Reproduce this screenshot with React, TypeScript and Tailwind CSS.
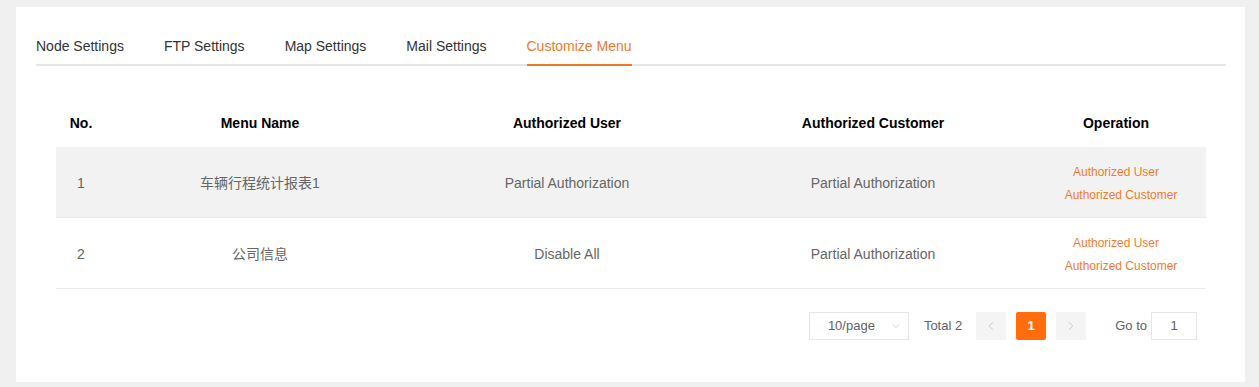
import { ChevronDown, ChevronLeft, ChevronRight } from "lucide-react";

const tabs = ["Node Settings", "FTP Settings", "Map Settings", "Mail Settings", "Customize Menu"];

const rows = [
  { no: 1, name: "车辆行程统计报表1", user: "Partial Authorization", customer: "Partial Authorization" },
  { no: 2, name: "公司信息", user: "Disable All", customer: "Partial Authorization" },
];

export default function App() {
  return (
    <div
      className="min-h-[387px] bg-[#f0f0f0] pt-[7px] pb-[5px] pl-4 pr-[14px]"
      style={{ fontFamily: '"Liberation Sans", Arial, "Noto Sans CJK SC", sans-serif' }}
    >
      <div className="bg-white h-[375px] pl-5 pr-[19px] pt-[29px]">
        {/* Tabs */}
        <div className="flex border-b-2 border-[#e6e6e6] h-[30px]">
          {tabs.map((t, i) => {
            const active = i === tabs.length - 1;
            return (
              <div
                key={t}
                className={
                  active
                    ? "text-sm text-[#f07a2c] border-b-2 border-[#f07a22] -mb-[2px] leading-[20px]"
                    : "text-sm text-[#333] mr-10 leading-[20px]"
                }
              >
                {t}
              </div>
            );
          })}
        </div>

        {/* Table */}
        <div className="mx-5 mt-[34px]">
          <div className="grid grid-cols-[50px_308px_306px_306px_180px] h-[47px] items-center text-sm font-bold text-black pb-[2px]">
            <div className="text-center">No.</div>
            <div className="text-center">Menu Name</div>
            <div className="text-center">Authorized User</div>
            <div className="text-center">Authorized Customer</div>
            <div className="text-center">Operation</div>
          </div>
          {rows.map((r) => (
            <div
              key={r.no}
              className={
                "grid grid-cols-[50px_308px_306px_306px_180px] h-[71px] items-center text-sm text-[#666] border-b border-[#ebebeb] pt-[2px] " +
                (r.no === 1 ? "bg-[#f2f2f2]" : "bg-white")
              }
            >
              <div className="text-center">{r.no}</div>
              <div className="text-center">{r.name}</div>
              <div className="text-center">{r.user}</div>
              <div className="text-center">{r.customer}</div>
              <div className="flex flex-col items-center gap-[7px] text-xs text-[#f47a2e] pl-[10px]">
                <span className="pr-[10px]">Authorized User</span>
                <span>Authorized Customer</span>
              </div>
            </div>
          ))}
        </div>

        {/* Pagination */}
        <div className="flex items-center justify-end mt-[23px] pr-[29px] text-[13px] text-[#606266]">
          <div className="w-[100px] h-[28px] border border-[#e6e6e6] flex items-center justify-between pl-[18px] pr-[6px]">
            <span>10/page</span>
            <ChevronDown className="w-3 h-3 text-[#c0c4cc]" strokeWidth={1.5} />
          </div>
          <span className="ml-[15px]">Total 2</span>
          <div className="ml-[14px] w-[30px] h-[28px] bg-[#f4f4f5] flex items-center justify-center">
            <ChevronLeft className="w-3.5 h-3.5 text-[#c0c4cc]" strokeWidth={1.5} />
          </div>
          <div className="ml-[10px] w-[30px] h-[28px] bg-[#ff6d0c] rounded-[2px] flex items-center justify-center text-white font-bold">
            1
          </div>
          <div className="ml-[10px] w-[30px] h-[28px] bg-[#f4f4f5] flex items-center justify-center">
            <ChevronRight className="w-3.5 h-3.5 text-[#c0c4cc]" strokeWidth={1.5} />
          </div>
          <span className="ml-[29px]">Go to</span>
          <div className="ml-[4px] w-[46px] h-[28px] border border-[#e6e6e6] flex items-center justify-center">
            1
          </div>
        </div>
      </div>
    </div>
  );
}
